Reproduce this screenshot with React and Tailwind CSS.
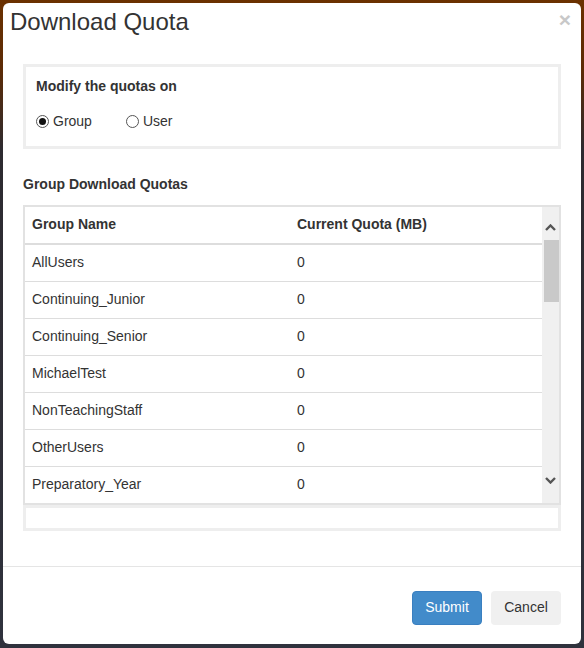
import React from "react";

const rows = [
  "AllUsers",
  "Continuing_Junior",
  "Continuing_Senior",
  "MichaelTest",
  "NonTeachingStaff",
  "OtherUsers",
  "Preparatory_Year",
];

function Chevron({ up }) {
  return (
    <svg width="11" height="7" viewBox="0 0 11 7" className="block">
      <path
        d={up ? "M1 6 L5.5 1.5 L10 6" : "M1 1 L5.5 5.5 L10 1"}
        fill="none"
        stroke="#555"
        strokeWidth="2.4"
      />
    </svg>
  );
}

function Radio({ checked, label }) {
  return (
    <label className="flex items-center h-[20px]">
      <span className="w-[13px] h-[13px] rounded-full border border-[#555] bg-white flex items-center justify-center">
        {checked && <span className="w-[7px] h-[7px] rounded-full bg-[#111]" />}
      </span>
      <span className="ml-[4px]">{label}</span>
    </label>
  );
}

export default function App() {
  return (
    <div className="w-[584px] h-[648px] pt-[3px] pl-[3px] bg-[linear-gradient(180deg,#6b3100_0px,#5c2b06_70px,#2d2a30_150px,#2f323d_100%)] font-['Liberation_Sans',Arial,sans-serif] text-[14px] text-[#333]">
      <div className="w-[578px] h-[641px] rounded-[6px] bg-white flex flex-col overflow-hidden">
        {/* header */}
        <div className="flex justify-between pt-[6px] pl-[7px] pr-[10px]">
          <h1 className="text-[24px] leading-[26px] font-normal">Download Quota</h1>
          <span className="text-[21px] leading-[21px] font-bold text-[#c8c8c8]">×</span>
        </div>

        {/* body */}
        <div className="flex-1 px-[20px] pt-[29px]">
          <div className="border-[3px] border-[#eeeeee] pt-[9px] px-[10px] pb-[15px]">
            <div className="font-bold leading-[20px]">Modify the quotas on</div>
            <div className="mt-[15px] flex items-center">
              <Radio checked label="Group" />
              <div className="ml-[34px]">
                <Radio label="User" />
              </div>
            </div>
          </div>

          <div className="mt-[25px] font-bold leading-[20px]">Group Download Quotas</div>

          <div className="mt-[11px] h-[300px] border-2 border-[#e2e2e2] flex">
            <div className="w-[517px] flex flex-col">
              <div className="h-[38px] border-b-2 border-[#dddddd] flex items-center pb-[2px] font-bold shrink-0">
                <div className="w-[264px] pl-[7px]">Group Name</div>
                <div className="pl-[8px]">Current Quota (MB)</div>
              </div>
              <div className="h-[258px] overflow-hidden">
                {rows.map((r) => (
                  <div key={r} className="h-[37px] border-b border-[#dddddd] flex items-center pb-[2px]">
                    <div className="w-[264px] pl-[7px]">{r}</div>
                    <div className="pl-[8px]">0</div>
                  </div>
                ))}
              </div>
            </div>
            <div className="w-[17px] bg-[#f0f0f0] flex flex-col">
              <div className="h-[33px] flex items-end justify-center pb-[9px]">
                <Chevron up />
              </div>
              <div className="h-[62px] ml-[2px] bg-[#c9c9c9]" />
              <div className="flex-1" />
              <div className="h-[30px] flex items-start justify-center pt-[4px]">
                <Chevron />
              </div>
            </div>
          </div>
          <div className="h-[26px] border-[3px] border-[#eeeeee]" />
        </div>

        {/* footer */}
        <div className="border-t border-[#e5e5e5] pt-[24px] pb-[19px] pr-[20px] flex justify-end gap-[9px]">
          <button className="w-[70px] h-[34px] rounded-[4px] bg-[#428bca] border border-[#3a7fc0] text-white text-[14px] pb-[1px]">
            Submit
          </button>
          <button className="w-[70px] h-[34px] rounded-[4px] bg-[#f0f0f0] text-[#333] text-[14px] pb-[1px]">
            Cancel
          </button>
        </div>
      </div>
    </div>
  );
}
